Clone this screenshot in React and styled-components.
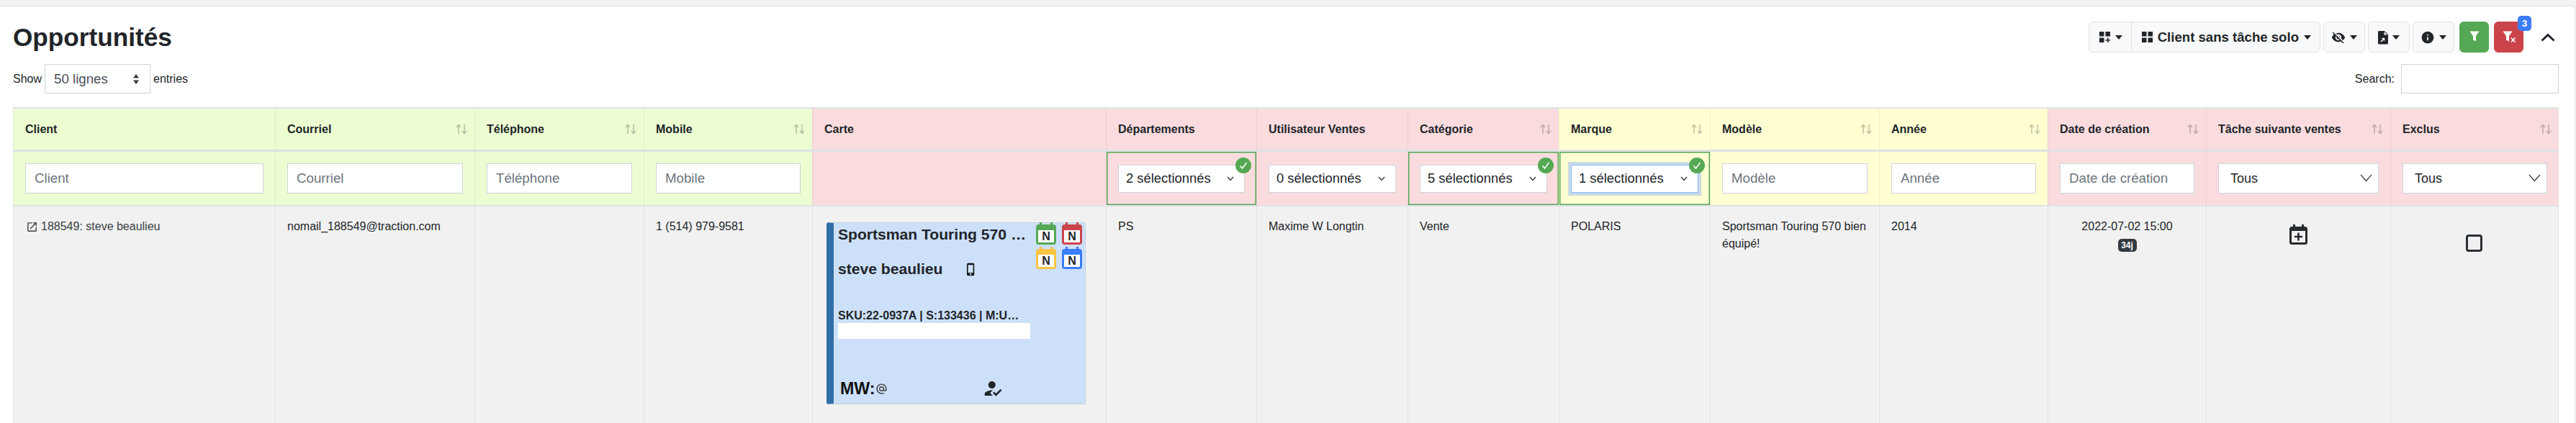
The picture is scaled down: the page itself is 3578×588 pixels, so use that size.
import React from 'react';
import styled, { createGlobalStyle } from 'styled-components';
import {
  MdVisibilityOff,
  MdInfo,
  MdHowToReg,
  MdPhoneIphone,
  MdAlternateEmail,
  MdOutlineOpenInNew,
} from 'react-icons/md';

const GlobalStyle = createGlobalStyle`
  * { box-sizing: border-box; }
  html, body { margin: 0; height: 100%; }
  body {
    background: #f3f3f4;
    color: #212529;
    font-family: "Liberation Sans", Arial, sans-serif;
    font-size: 16px;
    line-height: 24px;
    overflow: hidden;
  }
`;

const tints = { green: '#ecfdd2', pink: '#fadcde', yellow: '#ffffd2' };

const Page = styled.div`
  height: 588px;
  padding: 8px 1px 0 0;
  overflow: hidden;
`;

const Panel = styled.main`
  background: #fff;
  border: 1px solid #dee2e6;
  border-left: 0;
  border-bottom: 0;
  border-top-right-radius: 6px;
  height: 580px;
  padding: 21px 22px 0 18px;
`;

const TitleRow = styled.header`
  display: flex;
  align-items: center;
  justify-content: space-between;
  height: 43px;
`;

const Title = styled.h1`
  margin: 0;
  font-size: 35.2px;
  line-height: 40px;
  font-weight: 700;
`;

const Toolbar = styled.div`
  display: flex;
  align-items: center;
  gap: 4px;
`;

const Group = styled.div`
  display: flex;
  background: #f8f9fa;
  border: 1px solid #dee2e6;
  border-radius: 6px;
  height: 43px;
`;

const GroupPart = styled.div`
  display: flex;
  align-items: center;
  gap: 7px;
  padding: 0 12px 0 14px;
  font-size: 18.6px;
  font-weight: 700;
  white-space: nowrap;
  & + & { border-left: 1px solid #dee2e6; }
`;

const ToolButton = styled.button`
  display: flex;
  align-items: center;
  justify-content: center;
  gap: 6px;
  width: 58px;
  height: 43px;
  padding: 0;
  background: #f8f9fa;
  border: 1px solid #dee2e6;
  border-radius: 6px;
  color: #212529;
`;

const Caret = styled.span`
  width: 0;
  height: 0;
  border-left: 5.5px solid transparent;
  border-right: 5.5px solid transparent;
  border-top: 6px solid #212529;
`;

const FilterButton = styled.button`
  position: relative;
  display: flex;
  align-items: center;
  justify-content: center;
  width: 41px;
  height: 43px;
  margin-left: 3px;
  padding: 0;
  background: ${p => p.$bg};
  border: 1px solid ${p => p.$bg};
  border-radius: 6px;
`;

const CountBadge = styled.span`
  position: absolute;
  top: -9px;
  right: -12px;
  width: 19px;
  height: 21px;
  display: flex;
  align-items: center;
  justify-content: center;
  background: #3b7df8;
  border-radius: 5px;
  color: #fff;
  font-size: 13px;
  font-weight: 700;
`;

const Collapse = styled.button`
  display: flex;
  align-items: center;
  margin-left: 20px;
  margin-right: 5px;
  padding: 0;
  background: none;
  border: 0;
`;

const ControlsRow = styled.div`
  display: flex;
  align-items: center;
  justify-content: space-between;
  height: 41px;
  margin: 16px 0 19px;
`;

const Length = styled.div`
  display: flex;
  align-items: center;
  gap: 4px;
`;

const LengthSelect = styled.div`
  display: flex;
  align-items: center;
  justify-content: space-between;
  width: 147px;
  height: 41px;
  padding: 0 15px 0 12px;
  border: 1px solid #ced4da;
  color: #495057;
  font-size: 18.7px;
`;

const Search = styled.label`
  display: flex;
  align-items: center;
  gap: 9px;
`;

const SearchInput = styled.input`
  width: 219px;
  height: 41px;
  border: 1px solid #ced4da;
  outline: 0;
`;

const Table = styled.table`
  width: 3536px;
  table-layout: fixed;
  border-collapse: separate;
  border-spacing: 0;
`;

const HeadCell = styled.th`
  height: 62px;
  padding: 0 10px 0 16px;
  background: ${p => tints[p.$tint]};
  border-top: 2px solid #dee2e6;
  border-bottom: 3px solid #dee2e6;
  border-left: 1px solid rgba(0, 0, 0, 0.06);
  text-align: left;
  font-weight: 700;
`;

const HeadInner = styled.div`
  display: flex;
  align-items: center;
  justify-content: space-between;
`;

const FilterCell = styled.td`
  position: relative;
  height: 76px;
  padding: 0 16px;
  background: ${p => tints[p.$tint]};
  border-bottom: 2px solid #dee2e6;
  border-left: 1px solid rgba(0, 0, 0, 0.06);
  box-shadow: ${p => (p.$active ? 'inset 0 0 0 1.5px #55a854' : 'none')};
`;

const TextFilter = styled.input`
  display: block;
  width: 100%;
  height: 42px;
  padding: 0 12px;
  border: 1px solid #ced4da;
  font-family: inherit;
  font-size: 18.7px;
  outline: 0;
  &::placeholder { color: #6c757d; opacity: 1; }
`;

const MultiSelect = styled.div`
  display: flex;
  align-items: center;
  justify-content: space-between;
  height: 39px;
  padding: 0 14px 0 10px;
  background: #fff;
  border: 1px solid ${p => (p.$focused ? '#86b7fe' : '#ced4da')};
  box-shadow: ${p => (p.$focused ? '0 0 0 4px #c9dce3' : 'none')};
  font-size: 18.4px;
  white-space: nowrap;
`;

const PlainSelect = styled.div`
  display: flex;
  align-items: center;
  justify-content: space-between;
  height: 42px;
  padding: 0 7px 0 16px;
  background: #fff;
  border: 1px solid #ced4da;
  font-size: 18px;
`;

const CheckBadge = styled.span`
  position: absolute;
  top: 8px;
  right: 7px;
  display: flex;
  align-items: center;
  justify-content: center;
  width: 22px;
  height: 22px;
  background: #55a854;
  border-radius: 50%;
`;

const BodyCell = styled.td`
  height: 301px;
  padding: 16px;
  background: #f1f1f1;
  border-left: 1px solid #e0e2e4;
  vertical-align: top;
  text-align: ${p => p.$align || 'left'};
  &:last-child { border-right: 1px solid #e0e2e4; }
`;

const ClientLink = styled.div`
  display: flex;
  align-items: center;
  gap: 4px;
  margin-left: 1px;
  color: #3a3f44;
`;

const DayBadge = styled.span`
  display: inline-block;
  width: 26px;
  height: 18px;
  margin-top: 5px;
  background: #343a40;
  border-radius: 5px;
  color: #fff;
  font-size: 12px;
  line-height: 18px;
  font-weight: 700;
  text-align: center;
  vertical-align: top;
`;

const TaskAdd = styled.div`
  display: flex;
  justify-content: center;
  margin-top: 9px;
`;

const Exclude = styled.span`
  display: block;
  width: 23px;
  height: 24px;
  margin: 23px auto 0 calc(50% - 12px);
  border: 3px solid #2b3035;
  border-radius: 4px;
`;

const Card = styled.div`
  position: relative;
  display: flex;
  flex-direction: column;
  width: 360px;
  height: 253px;
  margin: 6px 0 0 3px;
  padding: 2px 0 6px 6px;
  background: #cce0f9;
  border: 1px solid #c5d0db;
  border-left: 10px solid #2f6fa6;
  border-radius: 3px;
`;

const CardTitle = styled.div`
  font-size: 21.1px;
  line-height: 28px;
  font-weight: 700;
  white-space: nowrap;
`;

const CardName = styled.div`
  display: flex;
  align-items: center;
  gap: 30px;
  margin-top: 20px;
  font-size: 21.1px;
  line-height: 28px;
  font-weight: 700;
`;

const CardSku = styled.div`
  margin-top: 39px;
  font-weight: 700;
  white-space: nowrap;
`;

const CardBlank = styled.div`
  width: 267px;
  height: 22px;
  margin-top: -2px;
  background: #fff;
`;

const CardFooter = styled.div`
  display: flex;
  align-items: center;
  margin: auto 0 0 3px;
  font-size: 23.2px;
  line-height: 28px;
  font-weight: 700;
  color: #111;
`;

const Assigned = styled.span`
  display: flex;
  margin-left: 131px;
`;

const Calendars = styled.div`
  position: absolute;
  top: 2px;
  right: 4px;
  display: grid;
  grid-template-columns: 28px 28px;
  column-gap: 8px;
  row-gap: 6px;
`;

const CalendarFrame = styled.div`
  position: relative;
  width: 28px;
  height: 28px;
  padding: 8px 3px 3px;
  background: ${p => p.$color};
  border-radius: 4px;
  &::before, &::after {
    content: '';
    position: absolute;
    top: -3px;
    width: 3px;
    height: 4px;
    background: ${p => p.$color};
  }
  &::before { left: 5px; }
  &::after { right: 5px; }
`;

const CalendarPage = styled.div`
  height: 17px;
  display: flex;
  align-items: center;
  justify-content: center;
  background: #fff;
  font-size: 16px;
  line-height: 17px;
  font-weight: 700;
`;

const SortArrows = () => (
  <svg width="16" height="15" viewBox="0 0 16 15" fill="none" stroke="#212529" strokeOpacity="0.28" strokeWidth="1.5">
    <path d="M4 14V1.5M1 5l3-3.5L7 5" />
    <path d="M12 1v12.5M9 10l3 3.5 3-3.5" />
  </svg>
);

const Chevron = ({ size = 10, weight = 1.4 }) => (
  <svg width={size} height={size * 0.7} viewBox="0 0 10 7" fill="none" stroke="#343a40" strokeWidth={weight}>
    <path d="M1 1l4 4.5L9 1" />
  </svg>
);

const Check = () => (
  <svg width="14" height="14" viewBox="0 0 14 14" fill="none" stroke="#fff" strokeWidth="1.5">
    <path d="M2.5 7.5l3 3.5 6-8" />
  </svg>
);

const GridIcon = ({ add }) => (
  <svg width="15" height="15" viewBox="0 0 15 15" fill="#212529">
    <rect width="6.5" height="6.5" />
    <rect x="8.5" width="6.5" height="6.5" />
    <rect y="8.5" width="6.5" height="6.5" />
    {add ? <path d="M11 8.5h1.6V11H15v1.5h-2.4V15H11v-2.5H8.5V11H11z" /> : <rect x="8.5" y="8.5" width="6.5" height="6.5" />}
  </svg>
);

const FileIcon = () => (
  <svg width="14" height="20" viewBox="0 0 14 20">
    <path fill="#212529" d="M1.5 1H9l5 5v12a1.5 1.5 0 0 1-1.5 1.5h-11A1.5 1.5 0 0 1 0 18V2.5A1.5 1.5 0 0 1 1.5 1z" />
    <path fill="#f8f9fa" d="M8.5 2v4.5H13z" />
    <path fill="none" stroke="#f8f9fa" strokeWidth="1.6" d="M4 16l4.5-4.5M5.5 11.5h3v3" />
  </svg>
);

const FunnelIcon = ({ clear }) => (
  <svg width="26" height="22" viewBox="0 0 26 22" fill="#fff">
    {clear ? (
      <>
        <path d="M4.500 2.500h13L13 9v7.500l-4-2V9z" />
        <path d="M16 11.500l5.500 6M21.500 11.500l-5.500 6" stroke="#fff" strokeWidth="1.6" />
      </>
    ) : (
      <path d="M6.500 2.500h13L15 9v7.500l-4-2V9z" />
    )}
  </svg>
);

const CalendarPlus = () => (
  <svg width="25" height="28" viewBox="0 0 25 28" fill="none">
    <path fill="#262a2e" d="M5 0h3v3h9V0h3v3h1.5A3.5 3.5 0 0 1 25 6.5v18a3.5 3.5 0 0 1-3.5 3.5h-18A3.5 3.5 0 0 1 0 24.500v-18A3.500 3.500 0 0 1 3.500 3H5z" />
    <rect x="3" y="9" width="19" height="16" fill="#f1f1f1" />
    <path stroke="#262a2e" strokeWidth="2.6" d="M12.500 11.500v11M7 17h11" />
  </svg>
);

const Calendar = ({ color }) => (
  <CalendarFrame $color={color}>
    <CalendarPage>N</CalendarPage>
  </CalendarFrame>
);

const columns = [
  { label: 'Client', width: 364, tint: 'green', placeholder: 'Client' },
  { label: 'Courriel', width: 277, tint: 'green', sort: true, placeholder: 'Courriel' },
  { label: 'Téléphone', width: 235, tint: 'green', sort: true, placeholder: 'Téléphone' },
  { label: 'Mobile', width: 234, tint: 'green', sort: true, placeholder: 'Mobile' },
  { label: 'Carte', width: 408, tint: 'pink' },
  { label: 'Départements', width: 209, tint: 'pink', multi: '2 sélectionnés', active: true },
  { label: 'Utilisateur Ventes', width: 210, tint: 'pink', multi: '0 sélectionnés' },
  { label: 'Catégorie', width: 210, tint: 'pink', sort: true, multi: '5 sélectionnés', active: true },
  { label: 'Marque', width: 210, tint: 'yellow', sort: true, multi: '1 sélectionnés', active: true, focused: true },
  { label: 'Modèle', width: 235, tint: 'yellow', sort: true, placeholder: 'Modèle' },
  { label: 'Année', width: 234, tint: 'yellow', sort: true, placeholder: 'Année' },
  { label: 'Date de création', width: 220, tint: 'pink', sort: true, placeholder: 'Date de création' },
  { label: 'Tâche suivante ventes', width: 256, tint: 'pink', sort: true, select: 'Tous' },
  { label: 'Exclus', width: 234, tint: 'pink', sort: true, select: 'Tous' },
];

function FilterControl({ col }) {
  if (col.placeholder) return <TextFilter placeholder={col.placeholder} />;
  if (col.multi) {
    return (
      <MultiSelect $focused={col.focused}>
        {col.multi}
        <Chevron />
      </MultiSelect>
    );
  }
  if (col.select) {
    return (
      <PlainSelect>
        {col.select}
        <Chevron size={19} weight={0.7} />
      </PlainSelect>
    );
  }
  return null;
}

function LeadCard() {
  return (
    <Card>
      <CardTitle>Sportsman Touring 570 …</CardTitle>
      <CardName>
        steve beaulieu
        <MdPhoneIphone size={19} color="#111" />
      </CardName>
      <CardSku>SKU:22-0937A | S:133436 | M:U…</CardSku>
      <CardBlank />
      <CardFooter>
        MW:
        <MdAlternateEmail size={17} color="#333" />
        <Assigned>
          <MdHowToReg size={30} color="#212529" />
        </Assigned>
      </CardFooter>
      <Calendars>
        <Calendar color="#55a854" />
        <Calendar color="#cb444a" />
        <Calendar color="#f9c440" />
        <Calendar color="#3b7df8" />
      </Calendars>
    </Card>
  );
}

export default function App() {
  return (
    <Page>
      <GlobalStyle />
      <Panel>
        <TitleRow>
          <Title>Opportunités</Title>
          <Toolbar>
            <Group>
              <GroupPart>
                <GridIcon add />
                <Caret />
              </GroupPart>
              <GroupPart>
                <GridIcon />
                Client sans tâche solo
                <Caret />
              </GroupPart>
            </Group>
            <ToolButton>
              <MdVisibilityOff size={20} />
              <Caret />
            </ToolButton>
            <ToolButton>
              <FileIcon />
              <Caret />
            </ToolButton>
            <ToolButton>
              <MdInfo size={20} />
              <Caret />
            </ToolButton>
            <FilterButton $bg="#55a854">
              <FunnelIcon />
            </FilterButton>
            <FilterButton $bg="#cb444a">
              <FunnelIcon clear />
              <CountBadge>3</CountBadge>
            </FilterButton>
            <Collapse>
              <svg width="20" height="12" viewBox="0 0 20 12" fill="none" stroke="#212529" strokeWidth="3">
                <path d="M1.500 10.500L10 2.500l8.500 8" />
              </svg>
            </Collapse>
          </Toolbar>
        </TitleRow>
        <ControlsRow>
          <Length>
            Show
            <LengthSelect>
              50 lignes
              <svg width="8" height="14" viewBox="0 0 8 14" fill="#343a40">
                <path d="M4 0l4 5.500H0zM4 14l4-5.500H0z" />
              </svg>
            </LengthSelect>
            entries
          </Length>
          <Search>
            Search:
            <SearchInput />
          </Search>
        </ControlsRow>
        <Table>
          <colgroup>
            {columns.map(col => (
              <col key={col.label} width={col.width} />
            ))}
          </colgroup>
          <thead>
            <tr>
              {columns.map(col => (
                <HeadCell key={col.label} $tint={col.tint}>
                  <HeadInner>
                    {col.label}
                    {col.sort && <SortArrows />}
                  </HeadInner>
                </HeadCell>
              ))}
            </tr>
            <tr>
              {columns.map(col => (
                <FilterCell key={col.label} $tint={col.tint} $active={col.active}>
                  <FilterControl col={col} />
                  {col.active && (
                    <CheckBadge>
                      <Check />
                    </CheckBadge>
                  )}
                </FilterCell>
              ))}
            </tr>
          </thead>
          <tbody>
            <tr>
              <BodyCell>
                <ClientLink>
                  <MdOutlineOpenInNew size={17} />
                  188549: steve beaulieu
                </ClientLink>
              </BodyCell>
              <BodyCell>nomail_188549@traction.com</BodyCell>
              <BodyCell />
              <BodyCell>1 (514) 979-9581</BodyCell>
              <BodyCell>
                <LeadCard />
              </BodyCell>
              <BodyCell>PS</BodyCell>
              <BodyCell>Maxime W Longtin</BodyCell>
              <BodyCell>Vente</BodyCell>
              <BodyCell>POLARIS</BodyCell>
              <BodyCell>Sportsman Touring 570 bien équipé!</BodyCell>
              <BodyCell>2014</BodyCell>
              <BodyCell $align="center">
                2022-07-02 15:00
                <br />
                <DayBadge>34j</DayBadge>
              </BodyCell>
              <BodyCell>
                <TaskAdd>
                  <CalendarPlus />
                </TaskAdd>
              </BodyCell>
              <BodyCell>
                <Exclude />
              </BodyCell>
            </tr>
          </tbody>
        </Table>
      </Panel>
    </Page>
  );
}
